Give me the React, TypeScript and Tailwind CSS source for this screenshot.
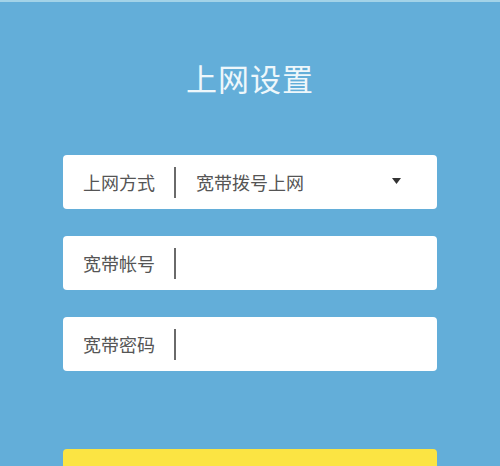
import React from 'react'

const font = { fontFamily: '"Noto Sans CJK SC", "Noto Sans", sans-serif' }

function Field({ label, value, select }: { label: string; value?: string; select?: boolean }) {
    return (
        <div className="mx-[63px] h-[54px] rounded-[4px] bg-white flex items-center pl-[20px] pr-[36px]">
            <span className="w-[74px] text-[18px] leading-none text-[#555]">{label}</span>
            <span className="ml-[17px] w-[2px] h-[31px] bg-[#6a6a6a]" />
            <span className="ml-[20px] flex-1 text-[18px] leading-none text-[#555]">{value}</span>
            {select && (
                <svg width="9" height="6" viewBox="0 0 9 6" className="mb-[2px]">
                    <path d="M0 0 H9 L4.5 6 Z" fill="#333" />
                </svg>
            )}
        </div>
    )
}

export default function App() {
    return (
        <div className="w-[500px] h-[466px] overflow-hidden bg-[#63aed9]" style={font}>
            <div className="h-[2px] bg-[#a3d3e8]" />
            {/* title */}
            <div className="pt-[56px] text-center text-[31px] leading-[40px] text-[#eef7fb] tracking-[1px]">
                上网设置
            </div>
            <div className="mt-[57px] flex flex-col gap-[27px]">
                <Field label="上网方式" value="宽带拨号上网" select />
                <Field label="宽带帐号" />
                <Field label="宽带密码" />
            </div>
            <div className="mt-[78px] mx-[63px] h-[54px] rounded-[4px] bg-[#fbe443] flex items-center justify-center text-[18px] text-[#555] tracking-[12px]">
                下一步
            </div>
        </div>
    )
}
